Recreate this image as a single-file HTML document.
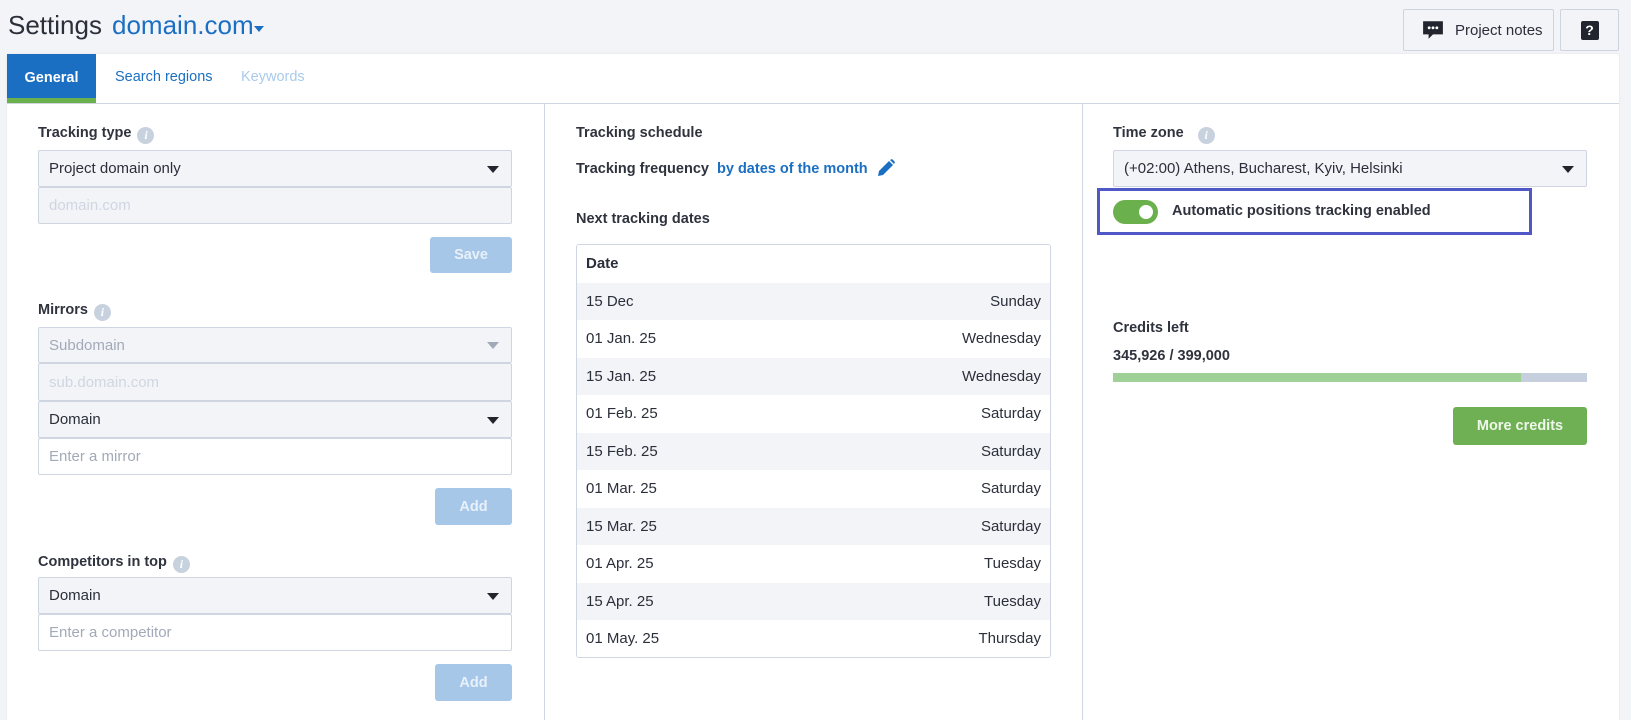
<!DOCTYPE html>
<html style="width:1631px;height:720px;overflow:hidden"><head><meta charset="utf-8"><style>
*{box-sizing:border-box;margin:0;padding:0}
body{width:1631px;height:720px;overflow:hidden;background:#f3f4f8;font-family:"Liberation Sans",sans-serif;font-size:15px;color:#2b2f3a;position:relative}
.a{position:absolute}
.lbl{font-weight:bold;font-size:14.5px;color:#2f333d}
.info{display:inline-block;width:17px;height:17px;border-radius:50%;background:#c8d2df;color:#fff;font-size:12px;font-style:italic;font-weight:bold;text-align:center;line-height:17px;font-family:"Liberation Serif",serif;vertical-align:-2px;margin-left:6px}
.sel{position:absolute;background:#f3f4f8;border:1px solid #cfd6e2;border-radius:2px;padding:0 10px;display:flex;align-items:center;font-size:15px}
.sel:after{content:"";position:absolute;right:12px;top:50%;margin-top:-3px;border-left:6px solid transparent;border-right:6px solid transparent;border-top:7px solid #22252d}
.sel.s2:after{border-top-color:#a2a9b8}
.inp{position:absolute;background:#fff;border:1px solid #cfd6e2;border-radius:2px;padding:0 10px;display:flex;align-items:center;color:#a2a9b8;font-size:15px}
.dis{background:#f3f4f8;color:#d0d6e1}
.btn{position:absolute;background:#a6c7e7;color:#e8f1fa;border-radius:3px;font-weight:bold;font-size:14.5px;display:flex;align-items:center;justify-content:center}
.row{position:absolute;left:0;right:0;height:37.5px;display:flex;justify-content:space-between;align-items:center;padding:0 9px;font-size:15px}
</style></head><body>
<div class="a" style="left:8px;top:10px;font-size:26px;color:#2b2f3a">Settings</div>
<div class="a" style="left:112px;top:10px;font-size:26px;color:#1b6fc2">domain.com</div>
<div class="a" style="left:254px;top:26px;border-left:5px solid transparent;border-right:5px solid transparent;border-top:6px solid #1b6fc2"></div>
<div class="a" style="left:1403px;top:9px;width:151px;height:42px;border:1px solid #cdd4df;border-radius:2px;background:#f3f4f8;display:flex;align-items:center;font-size:15px;color:#2b2f3a">
<svg style="margin:0 11px 0 18px" width="22" height="22" viewBox="0 0 20 20"><path d="M1 2h18v12h-9l-4 4v-4H1z" fill="#22252d"/><circle cx="6.5" cy="8" r="1.3" fill="#fff"/><circle cx="10" cy="8" r="1.3" fill="#fff"/><circle cx="13.5" cy="8" r="1.3" fill="#fff"/></svg>Project notes</div>
<div class="a" style="left:1560px;top:9px;width:59px;height:42px;border:1px solid #cdd4df;border-radius:2px;background:#f3f4f8;display:flex;align-items:center;justify-content:center"><div style="width:18px;height:19px;background:#22252d;border-radius:2px;color:#fff;font-weight:bold;font-size:14px;text-align:center;line-height:19px">?</div></div>

<div class="a" style="left:7px;top:54px;width:1612px;height:666px;background:#fff;border-radius:3px 3px 0 0;box-shadow:0 0 2px rgba(0,0,0,.08)">
<div class="a" style="left:0;top:0;width:89px;height:49px;background:#1b6fc2;border-bottom:5px solid #6ab04c;color:#fff;font-weight:bold;font-size:14.5px;display:flex;align-items:center;justify-content:center;padding-top:3px">General</div>
<div class="a" style="left:108px;top:15px;color:#1b6fc2;font-size:14.5px">Search regions</div>
<div class="a" style="left:234px;top:15px;color:#a9cbeb;font-size:14.5px">Keywords</div>
<div class="a" style="left:0;right:0;top:49px;height:1px;background:#cfd6e2"></div>
<div class="a" style="left:537px;top:49px;width:1px;height:617px;background:#cfd6e2"></div>
<div class="a" style="left:1075px;top:49px;width:1px;height:617px;background:#cfd6e2"></div>
</div>

<div class="a lbl" style="left:38px;top:125px">Tracking type<span class="info">i</span></div>
<div class="sel" style="left:38px;top:150px;width:474px;height:37px">Project domain only</div>
<div class="inp dis" style="left:38px;top:187px;width:474px;height:37px">domain.com</div>
<div class="btn" style="left:430px;top:237px;width:82px;height:36px">Save</div>

<div class="a lbl" style="left:38px;top:302px">Mirrors<span class="info">i</span></div>
<div class="sel s2" style="left:38px;top:327px;width:474px;height:36px;color:#a2a9b8">Subdomain</div>
<div class="inp dis" style="left:38px;top:363px;width:474px;height:38px">sub.domain.com</div>
<div class="sel" style="left:38px;top:401px;width:474px;height:37px">Domain</div>
<div class="inp" style="left:38px;top:438px;width:474px;height:37px">Enter a mirror</div>
<div class="btn" style="left:435px;top:488px;width:77px;height:37px">Add</div>

<div class="a lbl" style="left:38px;top:554px">Competitors in top<span class="info">i</span></div>
<div class="sel" style="left:38px;top:577px;width:474px;height:37px">Domain</div>
<div class="inp" style="left:38px;top:614px;width:474px;height:37px">Enter a competitor</div>
<div class="btn" style="left:435px;top:664px;width:77px;height:37px">Add</div>

<div class="a lbl" style="left:576px;top:125px">Tracking schedule</div>
<div class="a lbl" style="left:576px;top:161px">Tracking frequency</div>
<div class="a" style="left:717px;top:161px;color:#1b6fc2;font-weight:bold;font-size:14.5px">by dates of the month</div>
<svg class="a" style="left:876px;top:158px" width="20" height="20" viewBox="0 0 20 20"><path d="M2 18l1-5L13 3l4 4L7 17z" fill="#1b6fc2"/><path d="M14 2l2-1 3 3-1 2z" fill="#1b6fc2"/></svg>
<div class="a lbl" style="left:576px;top:211px">Next tracking dates</div>
<div class="a" style="left:576px;top:244px;width:475px;height:414px;border:1px solid #cfd6e2;border-radius:3px;overflow:hidden">
<div style="position:relative;height:412px">
<div class="row" style="top:0;font-weight:bold;background:#fff">Date</div>
<div class="row" style="top:37.5px;background:#f3f4f8"><span>15 Dec</span><span>Sunday</span></div>
<div class="row" style="top:75px;background:#fff"><span>01 Jan. 25</span><span>Wednesday</span></div>
<div class="row" style="top:112.5px;background:#f3f4f8"><span>15 Jan. 25</span><span>Wednesday</span></div>
<div class="row" style="top:150px;background:#fff"><span>01 Feb. 25</span><span>Saturday</span></div>
<div class="row" style="top:187.5px;background:#f3f4f8"><span>15 Feb. 25</span><span>Saturday</span></div>
<div class="row" style="top:225px;background:#fff"><span>01 Mar. 25</span><span>Saturday</span></div>
<div class="row" style="top:262.5px;background:#f3f4f8"><span>15 Mar. 25</span><span>Saturday</span></div>
<div class="row" style="top:300px;background:#fff"><span>01 Apr. 25</span><span>Tuesday</span></div>
<div class="row" style="top:337.5px;background:#f3f4f8"><span>15 Apr. 25</span><span>Tuesday</span></div>
<div class="row" style="top:375px;background:#fff"><span>01 May. 25</span><span>Thursday</span></div>
</div></div>

<div class="a lbl" style="left:1113px;top:125px">Time zone<span class="info" style="margin-left:14px">i</span></div>
<div class="sel" style="left:1113px;top:150px;width:474px;height:37px">(+02:00) Athens, Bucharest, Kyiv, Helsinki</div>
<div class="a" style="left:1097px;top:188px;width:435px;height:47px;border:3px solid #5058c8"></div>
<div class="a" style="left:1113px;top:200px;width:45px;height:24px;border-radius:12px;background:#6ab04c"><div style="position:absolute;right:5px;top:5px;width:14px;height:14px;border-radius:50%;background:#fff"></div></div>
<div class="a lbl" style="left:1172px;top:203px">Automatic positions tracking enabled</div>
<div class="a lbl" style="left:1113px;top:320px">Credits left</div>
<div class="a lbl" style="left:1113px;top:348px">345,926 / 399,000</div>
<div class="a" style="left:1113px;top:373px;width:474px;height:9px;background:#c6cfdd"><div style="width:408px;height:9px;background:#9fd197"></div></div>
<div class="btn" style="left:1453px;top:407px;width:134px;height:38px;background:#70b055;color:#eef7ea">More credits</div>
</body></html>
